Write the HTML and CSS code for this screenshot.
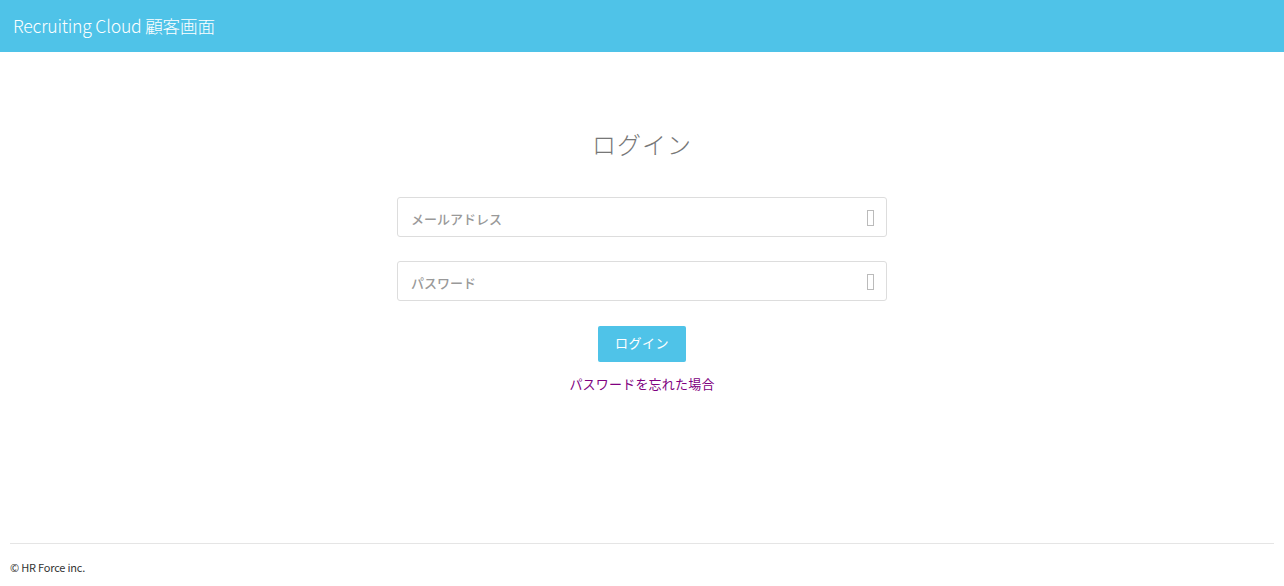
FILE: index.html
```html
<!DOCTYPE html>
<html lang="ja">
<head>
<meta charset="utf-8">
<title>Recruiting Cloud 顧客画面</title>
<link rel="stylesheet" href="styles.css">
</head>
<body>
<header class="navbar">
  <span class="brand">Recruiting Cloud 顧客画面</span>
</header>
<main class="content">
  <h1 class="title">ログイン</h1>
  <form class="login-form">
    <div class="field">
      <input class="input" type="email" placeholder="メールアドレス">
      <span class="field-icon"></span>
    </div>
    <div class="field">
      <input class="input" type="password" placeholder="パスワード">
      <span class="field-icon"></span>
    </div>
    <button class="btn" type="button">ログイン</button>
    <a class="forgot" href="#">パスワードを忘れた場合</a>
  </form>
</main>
<footer class="footer">
  <hr class="rule">
  <p class="copy">© HR Force inc.</p>
</footer>
</body>
</html>
```

FILE: styles.css
```css
html, body {
  margin: 0;
  padding: 0;
}
body {
  font-family: "Noto Sans CJK JP", "Noto Sans", sans-serif;
  color: #333;
  background: #fff;
  width: 1284px;
  height: 586px;
  display: flex;
  flex-direction: column;
}
.navbar {
  height: 52px;
  background: #4fc3e8;
  display: flex;
  align-items: center;
  padding-left: 13px;
  box-sizing: border-box;
}
.brand {
  color: #fff;
  font-size: 17.6px;
  font-weight: 300;
  letter-spacing: -0.2px;
  line-height: 1;
  margin-top: -1px;
}
.content {
  flex: 1;
  display: flex;
  flex-direction: column;
  align-items: center;
}
.title {
  margin: 75px 0 0;
  font-size: 24px;
  font-weight: 300;
  color: #777;
  line-height: 34px;
  letter-spacing: 1px;
}
.login-form {
  width: 490px;
  margin-top: 36px;
  display: flex;
  flex-direction: column;
  align-items: center;
}
.field {
  position: relative;
  width: 100%;
  margin-bottom: 24px;
}
.input {
  display: block;
  width: 100%;
  height: 40px;
  box-sizing: border-box;
  border: 1px solid #ddd;
  border-radius: 3px;
  padding: 2px 13px 0;
  font-family: inherit;
  font-size: 13px;
  color: #555;
  outline: none;
}
.input::placeholder {
  color: #999;
  font-weight: 500;
}
.field-icon {
  position: absolute;
  right: 13px;
  top: 13px;
  width: 5px;
  height: 14px;
  border: 1px solid #bbb;
}
.btn {
  width: 88px;
  height: 36px;
  margin-top: 1px;
  border: none;
  border-radius: 2px;
  background: #4fc3e8;
  color: #fff;
  font-family: inherit;
  font-size: 13px;
  padding: 0 0 3px;
  letter-spacing: 0.5px;
}
.forgot {
  margin-top: 13px;
  font-size: 13px;
  color: #800080;
  text-decoration: none;
  line-height: 18px;
  letter-spacing: 0.2px;
}
.footer {
  padding: 0 10px;
  height: 43px;
}
.rule {
  margin: 0;
  border: none;
  border-top: 1px solid #e5e5e5;
}
.copy {
  margin: 15px 0 0;
  font-size: 11px;
  line-height: 16px;
  color: #333;
  letter-spacing: -0.2px;
}
```
